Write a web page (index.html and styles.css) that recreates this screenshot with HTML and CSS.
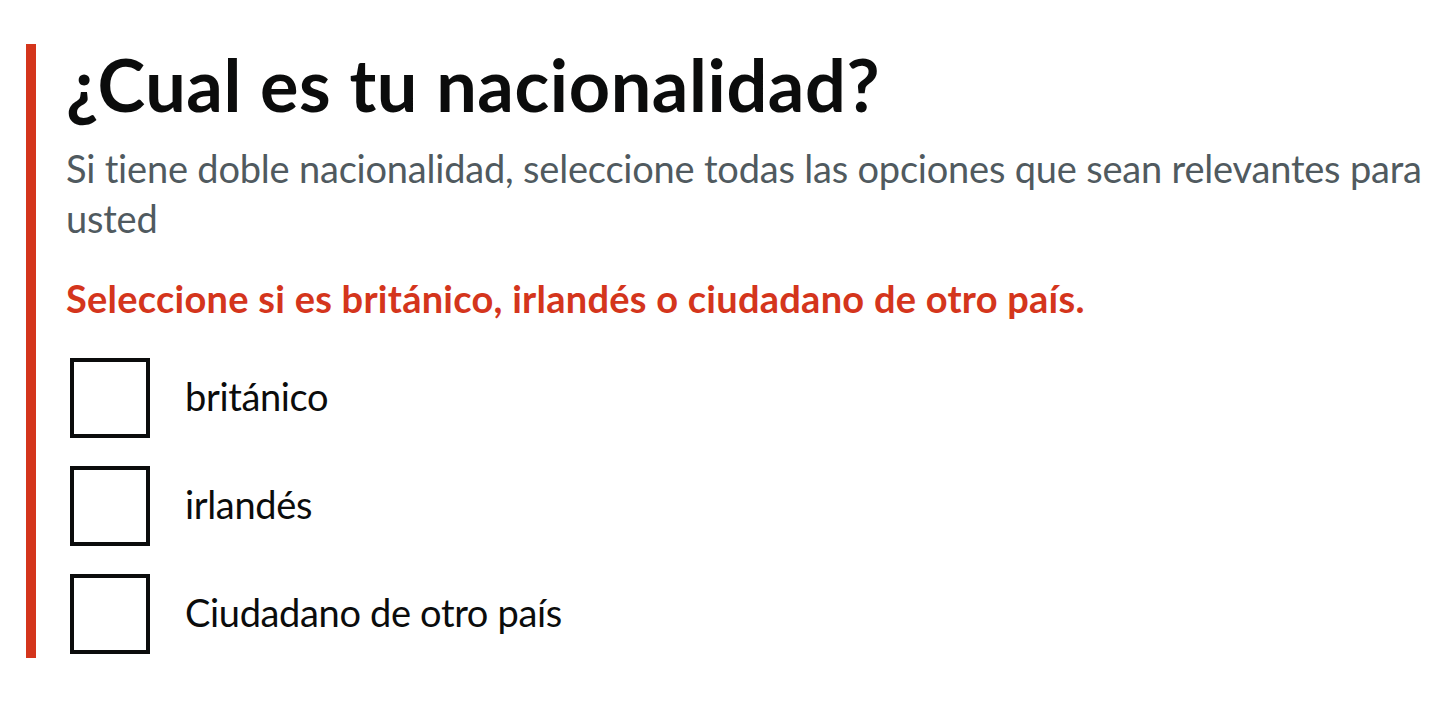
FILE: index.html
```html
<!DOCTYPE html>
<html lang="es">
<head>
<meta charset="utf-8">
<title>Nacionalidad</title>
<link rel="stylesheet" href="styles.css">
</head>
<body>
<main class="page">
  <div class="form-group form-group--error">
    <fieldset class="fieldset">
      <legend class="legend">
        <h1 class="heading">¿Cual es tu nacionalidad?</h1>
      </legend>
      <div class="hint">Si tiene doble nacionalidad, seleccione todas las opciones que sean relevantes para usted</div>
      <p class="error-message">Seleccione si es británico, irlandés o ciudadano de otro país.</p>
      <div class="checkboxes">
        <div class="checkbox">
          <input class="checkbox__input" id="n1" type="checkbox">
          <label class="checkbox__label" for="n1">británico</label>
        </div>
        <div class="checkbox">
          <input class="checkbox__input" id="n2" type="checkbox">
          <label class="checkbox__label" for="n2">irlandés</label>
        </div>
        <div class="checkbox">
          <input class="checkbox__input" id="n3" type="checkbox">
          <label class="checkbox__label" for="n3">Ciudadano de otro país</label>
        </div>
      </div>
    </fieldset>
  </div>
</main>
</body>
</html>
```

FILE: styles.css
```css
html, body {
  margin: 0;
  padding: 0;
  background: #ffffff;
}

body {
  font-family: Lato, "Liberation Sans", Arial, sans-serif;
  color: #0b0c0c;
}

.page {
  padding: 44px 0 0 26px;
}

.form-group--error {
  border-left: 10px solid #d4351c;
  padding-left: 30px;
}

.fieldset {
  margin: 0;
  padding: 0;
  border: 0;
  min-width: 0;
}

.legend {
  padding: 0;
  margin: 0 0 19px;
}

.heading {
  margin: 0;
  font-size: 72px;
  line-height: 80px;
  font-weight: 700;
  letter-spacing: 0.6px;
}

.hint {
  width: 1375px;
  font-size: 38px;
  line-height: 50px;
  letter-spacing: -0.2px;
  color: #505a5f;
  margin-bottom: 30px;
}

.error-message {
  margin: 0 0 31px;
  font-size: 38px;
  line-height: 50px;
  font-weight: 700;
  letter-spacing: 0.25px;
  color: #d4351c;
}

.checkboxes {
  display: flex;
  flex-direction: column;
  gap: 20px;
}

.checkbox {
  display: flex;
  align-items: flex-start;
  min-height: 88px;
}

.checkbox__input {
  appearance: none;
  -webkit-appearance: none;
  margin: 4px;
  width: 80px;
  height: 80px;
  border: 4px solid #0b0c0c;
  box-sizing: border-box;
  background: #ffffff;
  flex: none;
}

.checkbox__label {
  padding: 17px 30px 10px 31px;
  font-size: 38px;
  line-height: 50px;
  letter-spacing: -0.35px;
  color: #0b0c0c;
}
```
